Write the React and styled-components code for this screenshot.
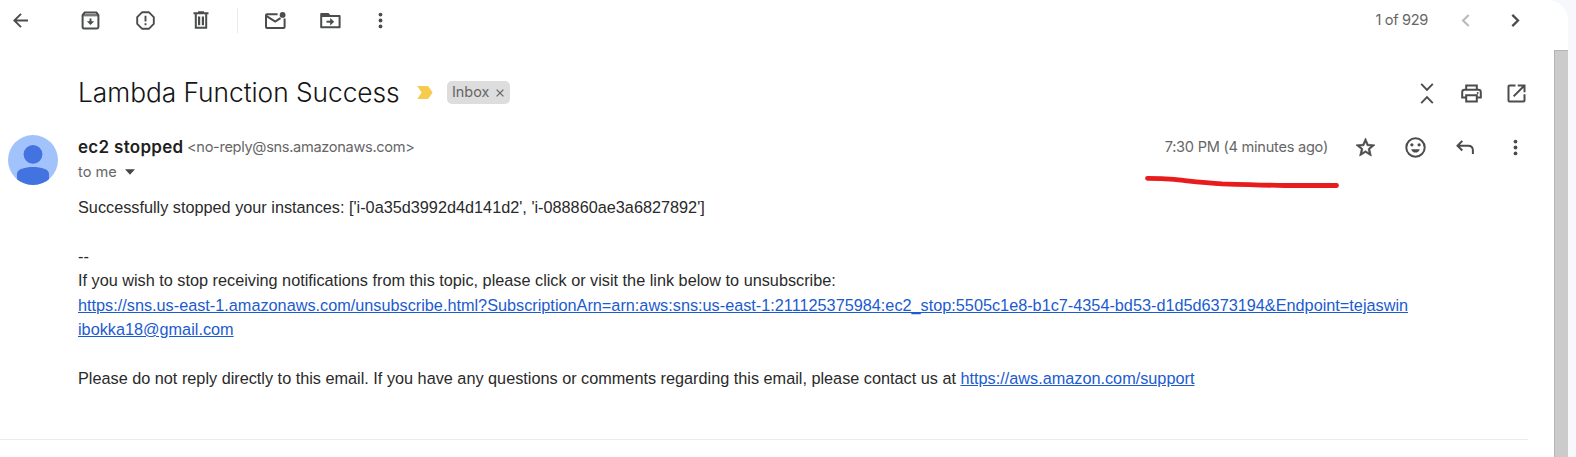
import React from "react";
import styled, { createGlobalStyle } from "styled-components";

const Global = createGlobalStyle`
  * { box-sizing: border-box; }
  body { margin: 0; background: #f6f8fc; overflow: hidden; }
`;

const Page = styled.div`
  display: flex;
  width: 1576px;
  height: 457px;
  background: #f6f8fc;
  font-family: Inter, sans-serif;
  color: #1f1f1f;
`;

const Card = styled.main`
  position: relative;
  width: 1568px;
  height: 457px;
  background: #fff;
  border-top-right-radius: 20px;
  overflow: hidden;
`;

const Toolbar = styled.header`
  display: flex;
  align-items: center;
  height: 50px;
  padding-bottom: 9px;
`;

const IconButton = styled.button`
  display: flex;
  flex: none;
  align-items: center;
  justify-content: center;
  width: ${(p) => p.$w}px;
  height: 40px;
  padding: 0;
  border: 0;
  background: none;
  color: ${(p) => p.$color || "#4a4d4c"};
  svg { display: block; }
`;

const Gap = styled.span`
  flex: none;
  width: ${(p) => p.$w}px;
`;

const Separator = styled.span`
  flex: none;
  width: 1px;
  height: 25px;
  margin: 0 10px 0 9px;
  background: #e9eaea;
`;

const Counter = styled.span`
  margin-left: auto;
  margin-right: 12px;
  padding-bottom: 1px;
  font-size: 14.6px;
  letter-spacing: -0.35px;
  color: #666;
  white-space: pre;
`;

const ContentArea = styled.div`
  display: flex;
  height: 407px;
`;

const Thread = styled.section`
  width: 1554px;
`;

const Scrollbar = styled.div`
  width: 14px;
  background: #cbcbcb;
  border-left: 1px solid #b4b4b4;
  border-top: 1px solid #b4b4b4;
`;

const SubjectRow = styled.div`
  display: flex;
  align-items: center;
  height: 43px;
  margin-top: 21px;
  padding: 0 15px 0 78px;
`;

const Subject = styled.h1`
  margin: 0;
  width: 339px;
  font-size: 26.3px;
  line-height: 34px;
  font-weight: 350;
  letter-spacing: -0.03px;
  color: #141414;
  white-space: nowrap;
`;

const Chip = styled.span`
  display: flex;
  align-items: center;
  justify-content: space-between;
  width: 63px;
  height: 23px;
  margin-left: 14px;
  padding: 0 6px 2px 5px;
  border-radius: 5px;
  background: #ddd;
  color: #666;
  font-size: 14.4px;
  svg { margin-top: 3px; }
`;

const SubjectActions = styled.div`
  display: flex;
  margin-left: auto;
  padding-top: 2px;
`;

const MessageHead = styled.div`
  display: flex;
  height: 74px;
  padding: 10px 14px 0 8px;
`;

const Avatar = styled.div`
  flex: none;
  width: 50px;
  height: 50px;
  margin: 11px 20px 0 0;
  border-radius: 50%;
  overflow: hidden;
`;

const HeadText = styled.div`
  flex: 1;
`;

const SenderRow = styled.div`
  display: flex;
  align-items: center;
  height: 25px;
  margin-top: 10px;
`;

const Sender = styled.span`
  width: 109px;
  font-size: 17px;
  font-weight: 600;
  letter-spacing: 0.3px;
  white-space: nowrap;
`;

const Meta = styled.span`
  font-size: 14.6px;
  letter-spacing: ${(p) => p.$ls || 0}px;
  color: #666;
  white-space: nowrap;
`;

const MessageActions = styled.div`
  display: flex;
  align-items: center;
  margin-left: auto;
  height: 25px;
  button { padding-top: 2px; }
`;

const Recipient = styled.div`
  display: flex;
  align-items: center;
  gap: 8px;
  height: 25px;
`;

const Body = styled.div`
  padding: 7px 0 0 78px;
  height: 252px;
  width: 1528px;
  border-bottom: 1px solid #ececec;
  font-family: "Liberation Sans", Arial, sans-serif;
  font-size: 16.25px;
  line-height: 24.4px;
  color: #2a2a2a;
`;

const Line = styled.div`
  height: 24.4px;
  white-space: nowrap;
`;

const Link = styled.a`
  color: #1b5bd0;
  text-decoration: underline;
`;

const Stroke = styled.svg`
  position: absolute;
  left: 1140px;
  top: 170px;
`;

const S = ({ w = 25, h = 25, box, children, sw = 2 }) => (
  <svg width={w} height={h} viewBox={box || `0 0 ${w} ${h}`} fill="none" stroke="currentColor" strokeWidth={sw}>
    {children}
  </svg>
);

const Back = () => (
  <S w={15} h={15} sw={1.9}><path d="M15 7.5H1.5M8 .8L1.3 7.5L8 14.2" /></S>
);
const Archive = () => (
  <S w={19} h={19}>
    <path d="M1.6 4.2L3.6 1.6H15.4L17.4 4.2V16Q17.4 17.4 16 17.4H3Q1.6 17.4 1.6 16Z" />
    <path d="M2 4.2H17" strokeWidth="2.4" opacity=".75" />
    <path d="M9.5 7.5V11" /><path d="M5.8 10.2H13.2L9.5 13.9Z" fill="currentColor" stroke="none" />
  </S>
);
const Report = () => (
  <S w={19} h={19} sw={1.9}>
    <path d="M6.2 1.2H12.8L17.8 6.2V12.8L12.8 17.8H6.2L1.2 12.8V6.2Z" strokeLinejoin="round" />
    <path d="M9.5 4.8V10.6M9.5 12.3V14.2" />
  </S>
);
const Trash = () => (
  <S w={16} h={19}>
    <path d="M.5 2.3H15.5M5 1.2H11" strokeWidth="2.1" />
    <path d="M2.8 3V16.8H13.2V3" />
    <path d="M6.1 5.5V14.2M9.9 5.5V14.2" strokeWidth="2.2" />
  </S>
);
const MailUnread = () => (
  <S w={21} h={18}>
    <path d="M12.6 2.2H2Q1 2.2 1 3.2V15Q1 16 2 16H18.6Q19.6 16 19.6 15V6.6" />
    <path d="M1.3 3.8L10.2 9.6L15.5 6.1" />
    <circle cx="17.6" cy="2.9" r="2.9" fill="currentColor" stroke="none" />
  </S>
);
const MoveTo = () => (
  <S w={21} h={17}>
    <path d="M1.2 2H8L9.8 4H19.6V15.2H1.2Z" strokeLinejoin="round" />
    <path d="M1 1.2H7.8L9.8 3.4V5H1Z" fill="currentColor" stroke="none" />
    <path d="M6.5 9.7H11.5" /><path d="M10.2 5.9L14.2 9.7L10.2 13.5Z" fill="currentColor" stroke="none" />
  </S>
);
const More = () => (
  <S w={5} h={17}>
    <g fill="currentColor" stroke="none"><circle cx="2.5" cy="2.6" r="1.9" /><circle cx="2.5" cy="8.5" r="1.9" /><circle cx="2.5" cy="14.4" r="1.9" /></g>
  </S>
);
const Prev = () => <S w={9} h={13} sw={2.1}><path d="M7.7 .9L2 6.5L7.7 12.1" /></S>;
const Next = () => <S w={9} h={13} sw={2.3}><path d="M1.3 .9L7 6.5L1.3 12.1" /></S>;
const Collapse = () => (
  <S w={14} h={21} sw={1.9}><path d="M1.2 .9L7 6.8L12.8 .9M1.2 20.1L7 14.2L12.8 20.1" /></S>
);
const Print = () => (
  <S w={21} h={19}>
    <path d="M5.2 5.4V1.4H15.8V5.4" />
    <path d="M5 13.6H1.2V8.2Q1.2 5.8 3.6 5.8H17.4Q19.8 5.8 19.8 8.2V13.6H16" />
    <path d="M5.2 11.2H15.8V17.4H5.2Z" />
    <circle cx="16.6" cy="8.9" r="1" fill="currentColor" stroke="none" />
  </S>
);
const NewWindow = () => (
  <S w={19} h={19}>
    <path d="M8.5 1.5H2.5Q1.5 1.5 1.5 2.5V16.5Q1.5 17.5 2.5 17.5H16.5Q17.5 17.5 17.5 16.5V10.2" />
    <path d="M10.8 1.5H17.5V8.2M17.2 1.8L6.6 12.4" />
  </S>
);
const Star = () => (
  <S w={19} h={19} box="2 2 20 20" sw={0.7}>
    <path fill="currentColor" d="M22 9.24l-7.19-.62L12 2 9.19 8.63 2 9.24l5.46 4.73L5.82 21 12 17.27 18.18 21l-1.63-7.03L22 9.24zM12 15.4l-3.76 2.27 1-4.28-3.32-2.88 4.38-.38L12 6.1l1.71 4.04 4.38.38-3.32 2.88 1 4.28L12 15.4z" />
  </S>
);
const Smile = () => (
  <S w={21} h={21} sw={2}>
    <circle cx="10.5" cy="10.5" r="9.2" />
    <g fill="currentColor" stroke="none"><circle cx="6.9" cy="7.8" r="1.6" /><circle cx="14.1" cy="7.8" r="1.6" /><path d="M6.2 12.2H14.8Q13.6 15.6 10.5 15.6Q7.4 15.6 6.2 12.2Z" /></g>
  </S>
);
const Reply = () => (
  <S w={18} h={15}><path d="M6.3 .9L1.5 5.7L6.3 10.5M1.5 5.7H12.2Q16.9 5.7 16.9 10.4V14" /></S>
);
const Importance = () => (
  <svg width="16" height="13" viewBox="0 0 16 13"><path d="M.3 0H10.4Q11.2 0 11.7 .7L15.6 6.5L11.7 12.3Q11.2 13 10.4 13H.3L4.6 6.5Z" fill="#f7cb4d" /></svg>
);
const Person = () => (
  <svg width="50" height="50" viewBox="0 0 50 50">
    <rect width="50" height="50" fill="#a1c2fa" />
    <circle cx="25" cy="19.3" r="9.4" fill="#4273e0" />
    <path d="M9 52V39C9 34 17 32 25 32S41 34 41 39V52Z" fill="#4273e0" />
  </svg>
);

export default function App() {
  return (
    <Page>
      <Global />
      <Card>
        <Toolbar>
          <IconButton $w={41}><Back /></IconButton>
          <Gap $w={22} />
          <IconButton $w={55}><Archive /></IconButton>
          <IconButton $w={55}><Report /></IconButton>
          <IconButton $w={55}><Trash /></IconButton>
          <Separator />
          <IconButton $w={55}><MailUnread /></IconButton>
          <IconButton $w={55}><MoveTo /></IconButton>
          <IconButton $w={45}><More /></IconButton>
          <Counter>1 of 929</Counter>
          <IconButton $w={50} $color="#b9baba"><Prev /></IconButton>
          <IconButton $w={50}><Next /></IconButton>
          <Gap $w={28} />
        </Toolbar>
        <ContentArea>
          <Thread>
            <SubjectRow>
              <Subject>Lambda Function Success</Subject>
              <Importance />
              <Chip>Inbox<S w={8} h={8} sw={1.3}><path d="M.6 .6L7.4 7.4M7.4 .6L.6 7.4" /></S></Chip>
              <SubjectActions>
                <IconButton $w={45}><Collapse /></IconButton>
                <IconButton $w={45}><Print /></IconButton>
                <IconButton $w={45}><NewWindow /></IconButton>
              </SubjectActions>
            </SubjectRow>
            <MessageHead>
              <Avatar><Person /></Avatar>
              <HeadText>
                <SenderRow>
                  <Sender>ec2 stopped</Sender>
                  <Meta $ls={-0.32}>&lt;no-reply@sns.amazonaws.com&gt;</Meta>
                  <MessageActions>
                    <Meta $ls={-0.26}>7:30 PM (4 minutes ago)</Meta>
                    <Gap $w={12} />
                    <IconButton $w={50}><Star /></IconButton>
                    <IconButton $w={50}><Smile /></IconButton>
                    <IconButton $w={50}><Reply /></IconButton>
                    <IconButton $w={50}><More /></IconButton>
                  </MessageActions>
                </SenderRow>
                <Recipient>
                  <Meta>to me</Meta>
                  <svg width="10" height="6" viewBox="0 0 10 6"><path d="M0 .3H10L5 5.7Z" fill="#444746" /></svg>
                </Recipient>
              </HeadText>
            </MessageHead>
            <Body>
              <Line>Successfully stopped your instances: ['i-0a35d3992d4d141d2', 'i-088860ae3a6827892']</Line>
              <Line />
              <Line>--</Line>
              <Line>If you wish to stop receiving notifications from this topic, please click or visit the link below to unsubscribe:</Line>
              <Line><Link>https://sns.us-east-1.amazonaws.com/unsubscribe.html?SubscriptionArn=arn:aws:sns:us-east-1:211125375984:ec2_stop:5505c1e8-b1c7-4354-bd53-d1d5d6373194&amp;Endpoint=tejaswin</Link></Line>
              <Line><Link>ibokka18@gmail.com</Link></Line>
              <Line />
              <Line>Please do not reply directly to this email. If you have any questions or comments regarding this email, please contact us at <Link>https://aws.amazon.com/support</Link></Line>
            </Body>
          </Thread>
          <Scrollbar />
        </ContentArea>
        <Stroke width="210" height="24" viewBox="0 0 210 24" fill="none" stroke="#e81c1c" strokeWidth="4.8" strokeLinecap="round" strokeLinejoin="round">
          <path d="M7.5 8.3C18 8.3 25 8.6 34 9.4C50 11 65 12.8 82 13.8C105 14.6 125 15.2 145 15.5H196.500" />
        </Stroke>
      </Card>
    </Page>
  );
}
